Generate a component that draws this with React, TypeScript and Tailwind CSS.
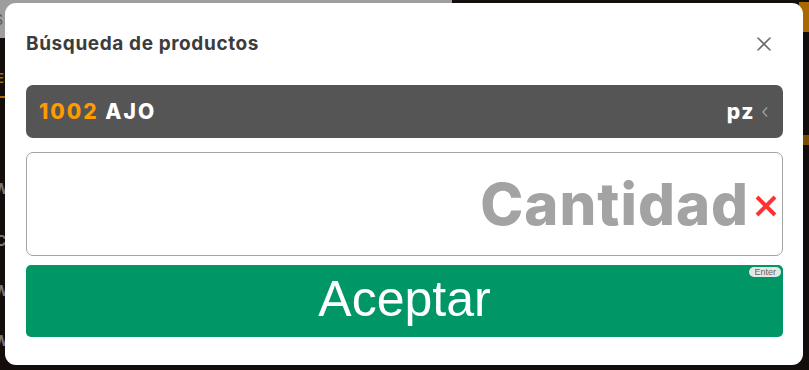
import React from "react";

function BackPage() {
  return (
    <div className="absolute inset-0 flex flex-col">
      <div className="h-[38px] flex">
        <div className="w-[452px] bg-[#9e9e9e] flex items-center overflow-hidden">
          <span className="ml-[-6px] text-[14px] text-[#555]">S</span>
        </div>
        <div className="flex-1 flex justify-end">
          <div className="w-[10px] h-[30px] mt-[2px] bg-[#a86a00]" />
        </div>
      </div>
      <div className="flex-1 flex justify-between">
        <div className="w-[6px] flex flex-col overflow-hidden">
          <span className="mt-[34px] ml-[-4px] text-[13px] font-bold text-[#a86a00] leading-none">ES</span>
          <div className="mt-[11px] w-[8px] h-[2px] bg-[#a86a00]" />
          <span className="mt-[84px] ml-[-6px] text-[14px] font-bold text-[#777] leading-none">W</span>
          <span className="mt-[38px] ml-[-4px] text-[14px] font-bold text-[#777] leading-none">C</span>
          <span className="mt-[36px] ml-[-6px] text-[14px] font-bold text-[#777] leading-none">W</span>
          <span className="mt-[36px] ml-[-6px] text-[14px] font-bold text-[#777] leading-none">W</span>
        </div>
        <div className="w-[10px] flex flex-col">
          <div className="mt-[97px] h-[10px] bg-[#7a4d00]" />
        </div>
      </div>
    </div>
  );
}

export default function App() {
  return (
    <div className="relative w-[809px] h-[370px] overflow-hidden bg-[#130d0b]" style={{ fontFamily: "Inter, 'Noto Sans', sans-serif" }}>
      <BackPage />

      {/* dialog */}
      <div className="absolute left-[5px] top-[3px] w-[798px] h-[362px] bg-white rounded-[11px] pl-[21px] pr-[20px] flex flex-col">
        <div className="h-[82px] flex items-center justify-between">
          <div className="text-[19px] font-bold text-[#3c3c3c] tracking-[0.6px]">Búsqueda de productos</div>
          <svg width="14" height="14" viewBox="0 0 14 14" className="mr-[12px]">
            <path d="M1 1 L13 13 M13 1 L1 13" stroke="#6b6b6b" strokeWidth="1.6" strokeLinecap="round" />
          </svg>
        </div>

        <div className="h-[53px] rounded-[7px] bg-[#555555] pl-[13px] pr-[14px] flex items-center justify-between">
          <div className="text-[21px] font-extrabold tracking-[2px]">
            <span className="text-[#ff9a00]">1002</span> <span className="text-white">AJO</span>
          </div>
          <div className="flex items-center gap-[6px]">
            <span className="text-[21px] font-extrabold tracking-[1.5px] text-white">pz</span>
            <svg width="8" height="12" viewBox="0 0 8 12">
              <path d="M6 1.5 L2 6 L6 10.5" stroke="#a0a0a0" strokeWidth="1.3" fill="none" />
            </svg>
          </div>
        </div>

        <div className="mt-[14px] h-[104px] rounded-[7px] border border-[#a3a3a3] flex items-center justify-end pr-[4px]">
          <span className="text-[58px] font-extrabold text-[#a3a3a3] leading-none tracking-[1px]">Cantidad</span>
          <svg width="24" height="24" viewBox="0 0 24 24" className="ml-[5px] mt-[4px]">
            <path d="M3 3 L21 21 M21 3 L3 21" stroke="#ff3131" strokeWidth="4" />
          </svg>
        </div>

        <div className="relative mt-[9px] h-[72px] rounded-[5px] bg-[#009665] flex items-center justify-center pb-[5px]">
          <span className="text-[50px] text-white leading-none" style={{ fontFamily: "'Liberation Sans', Arial, sans-serif" }}>Aceptar</span>
          <span className="absolute top-[2px] right-[2px] rounded-full bg-[#e6e6e6] px-[5px] text-[9px] leading-[10px] text-[#666]" style={{ fontFamily: "'Liberation Sans', Arial, sans-serif" }}>Enter</span>
        </div>
      </div>
    </div>
  );
}
